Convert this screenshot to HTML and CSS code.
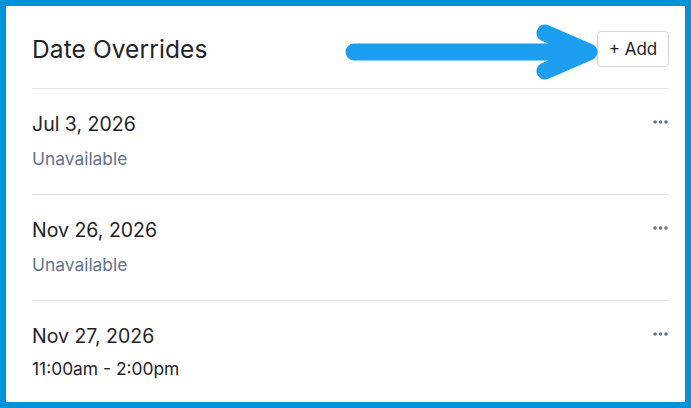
FILE: index.html
```html
<!DOCTYPE html>
<html>
<head>
<meta charset="utf-8">
<link rel="stylesheet" href="styles.css">
</head>
<body>
<div class="frame">
  <div class="header">
    <h2 class="title">Date Overrides</h2>
    <button class="add-btn">+ Add</button>
    <svg class="arrow" width="270" height="70" viewBox="0 0 270 70">
      <path d="M10 35 H244 M201 16 L245 35 L201 54" fill="none" stroke="#1c9ef0" stroke-width="17" stroke-linecap="round" stroke-linejoin="round"/>
    </svg>
  </div>
  <div class="row">
    <div class="info">
      <div class="date">Jul 3, 2026</div>
      <div class="status">Unavailable</div>
    </div>
    <svg class="dots" width="16" height="4" viewBox="0 0 16 4"><circle cx="2" cy="2" r="1.8"/><circle cx="7.5" cy="2" r="1.8"/><circle cx="13" cy="2" r="1.8"/></svg>
  </div>
  <div class="row">
    <div class="info">
      <div class="date">Nov 26, 2026</div>
      <div class="status">Unavailable</div>
    </div>
    <svg class="dots" width="16" height="4" viewBox="0 0 16 4"><circle cx="2" cy="2" r="1.8"/><circle cx="7.5" cy="2" r="1.8"/><circle cx="13" cy="2" r="1.8"/></svg>
  </div>
  <div class="row">
    <div class="info">
      <div class="date">Nov 27, 2026</div>
      <div class="hours">11:00am - 2:00pm</div>
    </div>
    <svg class="dots" width="16" height="4" viewBox="0 0 16 4"><circle cx="2" cy="2" r="1.8"/><circle cx="7.5" cy="2" r="1.8"/><circle cx="13" cy="2" r="1.8"/></svg>
  </div>
</div>
</body>
</html>
```
FILE: styles.css
```css
* { box-sizing: border-box; }
html, body { margin: 0; padding: 0; }
body {
  font-family: Inter, "Noto Sans", sans-serif;
  background: #ffffff;
  color: #1f2328;
}
.frame {
  width: 691px;
  height: 408px;
  border: 6px solid #0093d9;
  padding: 0 16px 0 26px;
  overflow: hidden;
  background: #fff;
}
.header {
  position: relative;
  height: 83px;
  display: flex;
  align-items: center;
  justify-content: space-between;
  border-bottom: 1px solid #e5e7eb;
  padding-top: 4px;
}
.title {
  margin: 0;
  font-size: 24.5px;
  font-weight: 400;
  color: #1f2328;
  letter-spacing: 0.1px;
}
.add-btn {
  font-family: inherit;
  width: 72px;
  height: 36px;
  border: 1px solid #d1d5db;
  border-radius: 4px;
  background: #fff;
  font-size: 17px;
  color: #1f2328;
  padding: 0;
}
.arrow {
  position: absolute;
  left: 312px;
  top: 11px;
}
.row {
  display: flex;
  justify-content: space-between;
  align-items: flex-start;
  height: 106px;
  padding-top: 23px;
  border-bottom: 1px solid #e5e7eb;
}
.date {
  font-size: 19.5px;
  line-height: 24px;
  color: #1f2328;
}
.status {
  margin-top: 11px;
  font-size: 17.4px;
  line-height: 24px;
  color: #64748b;
}
.hours {
  margin-top: 9px;
  font-size: 17.4px;
  line-height: 24px;
  color: #1f2328;
}
.dots {
  fill: #64748b;
  margin-top: 8px;
}
```
